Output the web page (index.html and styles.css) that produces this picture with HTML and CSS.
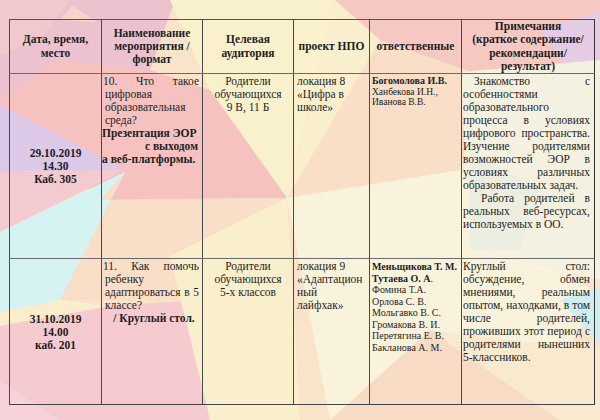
FILE: index.html
```html
<!DOCTYPE html>
<html lang="ru">
<head>
<meta charset="utf-8">
<title>План мероприятий</title>
<link rel="stylesheet" href="styles.css">
</head>
<body>
<svg class="bg" viewBox="0 0 600 420" preserveAspectRatio="none" aria-hidden="true">
  <rect x="0" y="0" width="600" height="420" fill="#f9e4ca"/>
  <polygon points="330,0 600,0 600,60 480,75 380,40" fill="#f6c8c2"/>
  <polygon points="540,30 600,12 600,110" fill="#e4cce5"/>
  <polygon points="0,0 175,0 150,70 0,100" fill="#ecc2cf"/>
  <polygon points="0,0 70,0 40,40 0,55" fill="#f0c8ce"/>
  <polygon points="60,20 72,5 96,22" fill="#f7d4ca"/>
  <polygon points="170,0 335,0 287,198 210,90" fill="#f9f1cc"/>
  <polygon points="60,60 150,70 210,90 287,198 100,200 0,105 0,100" fill="#f5c2c0"/>
  <polygon points="0,105 125,170 0,172" fill="#dcc8e7"/>
  <polygon points="0,172 125,170 0,232" fill="#f3cacf"/>
  <polygon points="0,232 125,172 60,300 0,312" fill="#d5f3f2"/>
  <polygon points="100,200 287,198 200,300 60,300 125,172" fill="#f9dec8"/>
  <polygon points="0,312 60,300 110,306 0,326" fill="#f9edcc"/>
  <polygon points="0,326 110,306 200,300 230,420 0,420" fill="#f6cbcf"/>
  <polygon points="0,380 60,420 0,420" fill="#f7d2da"/>
  <polygon points="170,256 287,198 300,420 210,420" fill="#faefcc"/>
  <polygon points="287,198 460,160 600,300 520,420 330,420" fill="#faf3dc"/>
  <polygon points="287,198 380,40 480,75 460,170" fill="#f9dec8"/>
  <polygon points="287,198 335,0 380,40" fill="#f9efcc"/>
  <polygon points="461,72 600,60 600,280 470,250" fill="#f4f1e0"/>
  <polygon points="470,150 540,190 520,250 470,250" fill="#eceee2"/>
  <polygon points="560,300 600,288 600,345" fill="#d0eef0"/>
  <polygon points="330,420 430,330 560,420" fill="#f8dbc4"/>
  <polygon points="430,330 600,350 600,420 560,420" fill="#f9e9ce"/>
</svg>

<table class="plan">
  <colgroup>
    <col class="w-date"><col class="w-event"><col class="w-aud"><col class="w-proj"><col class="w-resp"><col class="w-note">
  </colgroup>
  <thead>
    <tr class="head">
      <th class="c-date">Дата, время,<br>место</th>
      <th class="c-event">Наименование<br>мероприятия /<br>формат</th>
      <th class="c-aud">Целевая<br>аудитория</th>
      <th class="c-proj">проект НПО</th>
      <th class="c-resp">ответственные</th>
      <th class="c-note">Примечания<br>(краткое содержание/<br>рекомендации/<br>результат)</th>
    </tr>
  </thead>
  <tbody>
    <tr class="row1">
      <td class="c-date date">29.10.2019<br>14.30<br>Каб. 305</td>
      <td class="c-event">
        <span class="ln j first">10. Что такое</span>
        <span class="ln">цифровая</span>
        <span class="ln">образовательная</span>
        <span class="ln">среда?</span>
        <span class="ln b out">Презентация ЭОР</span>
        <span class="ln b right">с выходом</span>
        <span class="ln b out">а веб-платформы.</span>
      </td>
      <td class="c-aud center">Родители<br>обучающихся<br>9 В, 11 Б</td>
      <td class="c-proj">локация 8<br>«Цифра в<br>школе»</td>
      <td class="c-resp names small"><b>Богомолова И.В.</b><br>Ханбекова И.Н.,<br>Иванова В.В.</td>
      <td class="c-note">
        <span class="ln j ind1">Знакомство с</span>
        <span class="ln">особенностями</span>
        <span class="ln">образовательного</span>
        <span class="ln j">процесса в условиях</span>
        <span class="ln j">цифрового пространства.</span>
        <span class="ln j">Изучение родителями</span>
        <span class="ln j">возможностей ЭОР в</span>
        <span class="ln j">условиях различных</span>
        <span class="ln">образовательных задач.</span>
        <span class="ln j ind2">Работа родителей в</span>
        <span class="ln j">реальных веб-ресурсах,</span>
        <span class="ln">используемых в ОО.</span>
      </td>
    </tr>
    <tr class="row2">
      <td class="c-date date">31.10.2019<br>14.00<br>каб. 201</td>
      <td class="c-event">
        <span class="ln j first">11. Как помочь</span>
        <span class="ln">ребенку</span>
        <span class="ln j">адаптироваться в 5</span>
        <span class="ln">классе?</span>
        <span class="ln b center">/ Круглый стол.</span>
      </td>
      <td class="c-aud center">Родители<br>обучающихся<br>5-х классов</td>
      <td class="c-proj">локация 9<br>«Адаптацион<br>ный<br>лайфхак»</td>
      <td class="c-resp names"><b>Меньщикова Т. М.</b><br><b>Тутаева О. А</b>.<br>Фомина Т.А.<br>Орлова С. В.<br>Мольгавко В. С.<br>Громакова В. И.<br>Перетягина Е. В.<br>Бакланова А. М.</td>
      <td class="c-note">
        <span class="ln j">Круглый стол:</span>
        <span class="ln j">обсуждение, обмен</span>
        <span class="ln j">мнениями, реальным</span>
        <span class="ln j">опытом, находками, в том</span>
        <span class="ln j">числе родителей,</span>
        <span class="ln j">проживших этот период с</span>
        <span class="ln j">родителями нынешних</span>
        <span class="ln">5-классников.</span>
      </td>
    </tr>
  </tbody>
</table>
</body>
</html>
```

FILE: styles.css
```css
html, body {
  margin: 0;
  padding: 0;
  width: 600px;
  height: 420px;
  overflow: hidden;
}

body {
  position: relative;
  font-family: "Liberation Serif", "Times New Roman", serif;
  color: #1e1e1e;
}

.bg {
  position: absolute;
  left: 0;
  top: 0;
  width: 600px;
  height: 420px;
  z-index: -1;
}

.plan {
  border-collapse: collapse;
  table-layout: fixed;
  width: 585px;
  margin: 19px 0 0 9px;
  font-size: 11.5px;
  line-height: 13px;
}

.w-date { width: 92px; }
.w-event { width: 101px; }
.w-aud { width: 91px; }
.w-proj { width: 76px; }
.w-resp { width: 92px; }
.w-note { width: 133px; }

.plan th,
.plan td {
  border: 1px solid #4a4a4a;
  vertical-align: top;
  padding: 1px 3px 0 3px;
}

.plan th {
  font-weight: bold;
  text-align: center;
  vertical-align: middle;
  line-height: 13.3px;
  padding: 0 2px;
  height: 52px;
}

.plan .c-event { border-left-color: #777; }
.plan .c-proj { border-left-color: #6a6a6a; }
.plan .c-aud { border-left-color: #333; }
.plan .c-resp { border-left-color: #333; }
.plan .c-note { border-left-color: #333; border-right-color: #333; }
.plan .head th { border-bottom-color: #6a6a6a; border-top-color: #555; }
.row1 td { height: 182px; border-bottom-color: #6a6a6a; }
.row2 td { height: 143px; border-bottom-color: #444; }

.plan td.date {
  font-weight: bold;
  text-align: center;
  vertical-align: middle;
}

.center { text-align: center; }

.ln {
  display: block;
  text-align: left;
}

.ln.j {
  text-align: justify;
  text-align-last: justify;
}

.ln.b { font-weight: bold; }
.ln.right { text-align: right; margin-right: 1px; }
.ln.center { text-align: center; padding-left: 4px; }
.ln.out { margin-left: -3px; }
.ln.first { margin-left: -2px; }

.plan td.c-proj { padding-left: 3px; }

.plan td.names {
  padding: 2px 1px 0 2px;
  font-size: 10px;
  line-height: 11.5px;
}

.plan td.names.small {
  font-size: 9.5px;
  line-height: 10.6px;
}

.plan td.names.small b { font-size: 10px; }

.plan td.c-note {
  padding: 1px 4px 0 1px;
}

.ln.ind1 { text-indent: 11px; }
.ln.ind2 { text-indent: 18px; }
```
